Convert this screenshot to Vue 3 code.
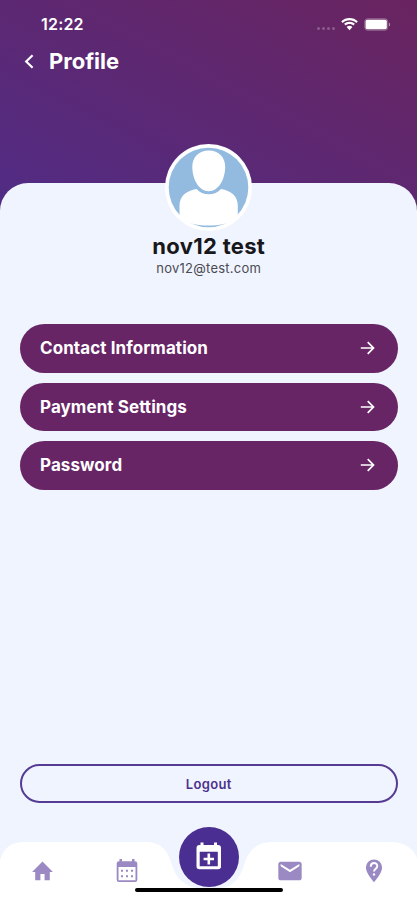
<script setup>
const links = ['Contact Information', 'Payment Settings', 'Password']
</script>

<template>
  <div class="screen">
    <header class="top">
      <div class="status">
        <span class="time">12:22</span>
        <div class="indicators">
          <div class="dots"><i v-for="n in 4" :key="n"></i></div>
          <svg class="wifi" width="17" height="13" viewBox="0 0 17 13" fill="#fff">
            <path d="M8.500 0C5.300 0 2.400 1.200.2 3.300L1.700 4.900C3.500 3.200 5.900 2.200 8.500 2.200S13.500 3.200 15.300 4.900L16.800 3.300C14.600 1.200 11.700 0 8.500 0Z" />
            <path d="M8.500 3.700C6.400 3.700 4.500 4.500 3.100 5.800L4.600 7.600C5.600 6.600 7 6.100 8.500 6.100S11.400 6.600 12.400 7.600L13.900 5.800C12.500 4.500 10.600 3.700 8.500 3.700Z" />
            <path d="M8.500 7.700C7.500 7.700 6.400 8.100 5.600 8.900L8.500 12.300L11.400 8.900C10.600 8.100 9.500 7.700 8.500 7.700Z" />
          </svg>
          <svg class="battery" width="27" height="13" viewBox="0 0 27 13">
            <rect x=".6" y=".6" width="23.200" height="11.800" rx="3.200" fill="#fff" fill-opacity=".15" stroke="#fff" stroke-opacity=".2" />
            <rect x="1.600" y="1.700" width="21.200" height="9.600" rx="1.700" fill="#fff" />
            <path d="M24.900 4.400C26.500 5 26.500 8 24.900 8.600Z" fill="#fff" fill-opacity=".5" />
          </svg>
        </div>
      </div>
      <div class="heading">
        <svg class="back" width="10" height="15" viewBox="0 0 10 15" fill="none" stroke="#fff" stroke-width="2.200">
          <path d="M8.600 1.300L2.200 7.500L8.600 13.700" />
        </svg>
        <h1>Profile</h1>
      </div>
    </header>

    <main class="sheet">
      <div class="avatar">
        <svg width="87" height="87" viewBox="0 0 87 87">
          <circle cx="43.500" cy="43.500" r="43.500" fill="#fff" />
          <circle cx="43.500" cy="43.500" r="39.800" fill="#93badf" />
          <path d="M43.800 6.500C54 6.500 60.300 13.500 60.200 23C60.100 35.500 53.500 47.200 43.800 47.200C34 47.200 27.400 35.500 27.300 23C27.200 13.500 33.600 6.500 43.800 6.500Z" fill="#fff" />
          <path d="M31.500 45C34.500 48.500 39 50.300 43.800 50.300S53 48.500 56 45C66 47 72.800 51.500 72.800 62V73L63 79C56 81 50 81.600 43.500 81.600S31 81 24 79L14.500 73V62C14.500 51.500 21.500 47 31.500 45Z" fill="#fff" />
        </svg>
      </div>
      <h2>nov12 test</h2>
      <p class="email">nov12@test.com</p>
      <nav class="links">
        <button v-for="label in links" :key="label" class="link">
          <span>{{ label }}</span>
          <svg width="15" height="14" viewBox="0 0 15 14" fill="none" stroke="#fff" stroke-width="1.700">
            <path d="M.8 7H13.500M7.700 1.200L13.500 7L7.700 12.800" />
          </svg>
        </button>
      </nav>
      <button class="logout">Logout</button>
    </main>

    <footer class="tabs">
      <svg class="tabs-shape" width="417" height="60" viewBox="0 0 417 60">
        <path d="M0 20C4 8 10 2 25 2H145C163 2 168 12 172 25C177 41 187 49 209 49S239 41 244 25C248 12 255 2 273 2H389C405 2 413 8 417 18V60H0Z" fill="#fff" />
      </svg>
      <div class="icons">
        <svg width="25" height="25" viewBox="0 0 24 24" fill="#9b89c3"><path d="M10 20.500v-6h4v6h5v-8h3L12 2.500 2 12.500h3v8z" /></svg>
        <svg class="calendar" width="26" height="26" viewBox="0 0 26 26" fill="#9b89c3">
          <path fill-rule="evenodd" d="M5.500 1H8V3.300H18V1H20.500V3.300H21Q23.300 3.300 23.300 5.600V21.700Q23.300 24 21 24H5Q2.700 24 2.700 21.700V5.600Q2.700 3.300 5 3.300H5.500ZM4.500 9V22.200H21.500V9Z" />
          <path d="M7 11.700h2v2H7zm5 0h2v2h-2zm5 0h2v2h-2zM7 17.200h2v2H7zm5 0h2v2h-2zm5 0h2v2h-2z" />
        </svg>
        <span class="gap"></span>
        <svg class="mail" width="28" height="28" viewBox="0 0 24 24" fill="#9b89c3"><path d="M20 4H4c-1.100 0-2 .9-2 2v12c0 1.100.9 2 2 2h16c1.100 0 2-.9 2-2V6c0-1.100-.9-2-2-2zm0 4-8 5-8-5V6l8 5 8-5v2z" /></svg>
        <svg width="26" height="26" viewBox="0 0 24 24">
          <path d="M12 1.300A7.500 7.500 0 0 0 4.500 8.800C4.500 14.300 12 22.300 12 22.300S19.500 14.300 19.500 8.800A7.500 7.500 0 0 0 12 1.300Z" fill="#9b89c3" />
          <path d="M9 8C9 3.500 15 3.800 15 7.500C15 9.800 12 10 12 12.500" fill="none" stroke="#fff" stroke-width="1.800" />
          <circle cx="12" cy="15.200" r="1.100" fill="#fff" />
        </svg>
      </div>
      <div class="fab">
        <svg width="26" height="29" viewBox="0 0 26 29" fill="#fff">
          <path fill-rule="evenodd" d="M4.500 .5H7.500V3H18V.5H21V3H22Q25 3 25 6V24.500Q25 27.300 22 27.300H3.500Q.5 27.300 .5 24.500V6Q.5 3 3.500 3H4.500ZM3.700 9.700V24.300H21.800V9.700Z" />
          <path d="M11.500 11.500h2.600v4.200H18v2.600h-3.900v4.200h-2.600v-4.200H7.600v-2.600h3.900z" />
        </svg>
      </div>
      <div class="home-bar"></div>
    </footer>
  </div>
</template>

<style>
body { margin: 0; }
</style>

<style scoped>
* { box-sizing: border-box; }
.screen {
  width: 417px;
  height: 900px;
  display: flex;
  flex-direction: column;
  overflow: hidden;
  font-family: Inter, "Liberation Sans", sans-serif;
  background: linear-gradient(to top right, #502c86 0, #69245f 100%) 0 0 / 417px 220px no-repeat, #f0f4fe;
}
.top { height: 182.500px; flex: none; color: #fff; }
.status {
  height: 48px;
  padding: 0 26px 0 41px;
  display: flex;
  align-items: center;
  justify-content: space-between;
}
.time { font-size: 16px; font-weight: 600; letter-spacing: 0.2px; }
.indicators { display: flex; align-items: center; }
.dots { display: flex; gap: 2px; padding-top: 9px; margin-right: 6px; }
.dots i { width: 3px; height: 3px; border-radius: 50%; background: rgba(255, 255, 255, 0.25); }
.wifi { margin-right: 6px; }
.heading { display: flex; align-items: center; height: 27px; padding-left: 24px; }
.back { margin-right: 15px; }
h1 { margin: 0 0 1px; font-size: 22px; line-height: 26px; font-weight: 700; letter-spacing: 0; }
.sheet {
  height: 717.500px;
  flex: none;
  padding: 0 19.500px 0 20px;
  display: flex;
  flex-direction: column;
  align-items: stretch;
  background: #f0f4fe;
  border-radius: 28px 28px 0 0;
}
.avatar { align-self: center; height: 87px; margin-top: -39px; }
.avatar svg { display: block; }
h2 { margin: 1.500px 0 0; text-align: center; font-size: 22px; line-height: 28px; font-weight: 700; letter-spacing: 0.3px; color: #17171c; }
.email { margin: 0; text-align: center; font-size: 13px; line-height: 16px; letter-spacing: 0.25px; color: #4b4b53; }
.links { display: flex; flex-direction: column; gap: 10px; margin-top: 48px; }
.link {
  height: 48.500px;
  border: 0;
  border-radius: 25px;
  padding: 0 23px 0 20px;
  display: flex;
  align-items: center;
  justify-content: space-between;
  background: #672566;
  color: #fff;
  font: 700 17px/22px Inter, sans-serif;
  letter-spacing: 0.08px;
}
.logout {
  height: 39px;
  margin-top: 274.500px;
  border: 2px solid #553b94;
  border-radius: 20px;
  background: transparent;
  color: #4b318d;
  font: 600 13px/16px Inter, sans-serif;
  letter-spacing: 0.35px;
}
.tabs { position: relative; height: 60px; margin-top: -60px; flex: none; }
.tabs-shape { display: block; }
.icons {
  position: absolute;
  inset: 18px 30px auto 30px;
  display: flex;
  align-items: center;
  justify-content: space-between;
  height: 26px;
}
.calendar { margin: 0 -2px 0 2px; }
.mail { margin: 0 1px 0 -1px; }
.gap { width: 26px; }
.fab {
  position: absolute;
  left: 179px;
  top: -13.500px;
  width: 60px;
  height: 60px;
  border-radius: 50%;
  background: #4a2e91;
  display: flex;
  align-items: center;
  justify-content: center;
}
.home-bar {
  position: absolute;
  left: 135px;
  top: 48px;
  width: 148px;
  height: 4px;
  border-radius: 2px;
  background: #000;
}
</style>
